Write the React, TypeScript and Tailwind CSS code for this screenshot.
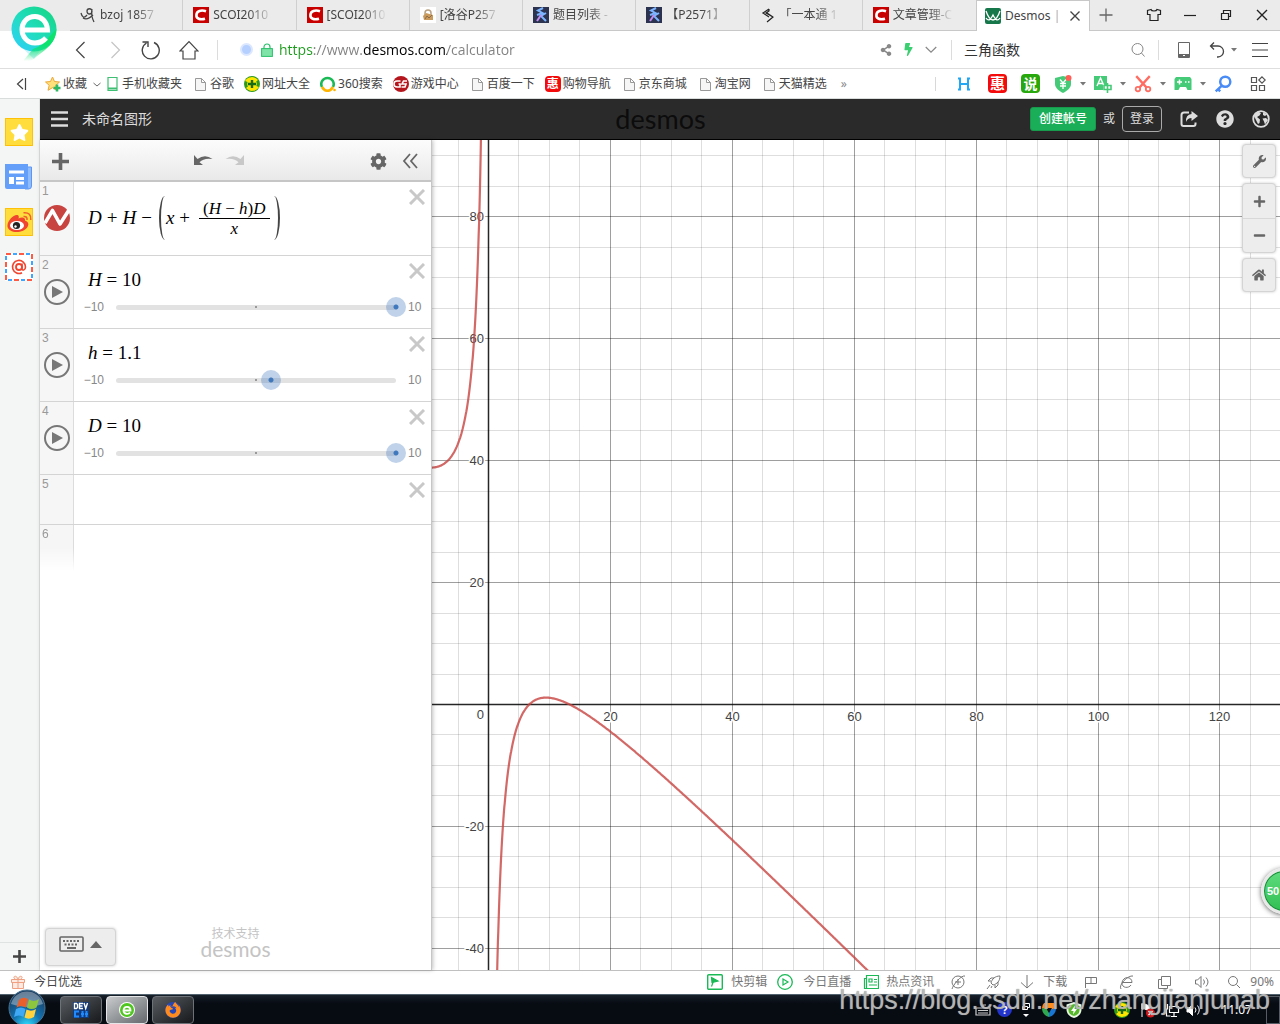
import { useLayoutEffect, useRef, useState } from "react";
import type { ReactNode } from "react";
import {
  FaBolt,
  FaCog,
  FaFirefoxBrowser,
  FaHome,
  FaMinus,
  FaPlus,
  FaQuestionCircle,
  FaShareAlt,
  FaStar,
  FaWrench,
} from "react-icons/fa";

const UI = "font-['Noto_Sans','Noto_Sans_CJK_SC',sans-serif]";
const ARIAL = "font-['Liberation_Sans','Noto_Sans_CJK_SC',sans-serif]";

type SvgProps = { className?: string; children: ReactNode; box?: string };

function Line({ className = "size-4", box = "0 0 16 16", children }: SvgProps) {
  return (
    <svg viewBox={box} className={className} fill="none" stroke="currentColor" aria-hidden="true">
      {children}
    </svg>
  );
}

function Caret() {
  return (
    <svg viewBox="0 0 6 4" className="h-1 w-1.5 text-[#777]" aria-hidden="true">
      <path d="M0 0h6L3 3.500z" fill="currentColor" />
    </svg>
  );
}

/* ---------- favicons ---------- */

function CsdnIcon() {
  return (
    <svg viewBox="0 0 16 16" className="size-4 shrink-0" aria-hidden="true">
      <rect width="16" height="16" fill="#c80000" />
      <path d="M13 4.200C8 2.600 3.800 4 3.400 7.800 3 11.600 7 13.200 12 11.800" fill="none" stroke="#fff" strokeWidth="2.600" />
    </svg>
  );
}

function BzojIcon() {
  return (
    <Line className="size-4 shrink-0 text-[#444]">
      <path d="M1 6c1 4 3 6 6 2M7 4c0 4 5 4 5 0 0-3-5-3-5 0M12 2c-1 5 0 9 2 13M3 11c3 2 7 0 10-3" strokeWidth="1.300" />
    </Line>
  );
}

function LockFavicon() {
  return (
    <svg viewBox="0 0 16 16" className="size-4 shrink-0" aria-hidden="true">
      <rect width="16" height="16" fill="#fff" />
      <path d="M5 8V6a3 3 0 0 1 6 0v2" fill="none" stroke="#b9a283" strokeWidth="1.500" />
      <path d="M3 9l3-3 7 2v5H4z" fill="#c99a5b" />
      <path d="M5 12l2-3 2 2 3-3" stroke="#8c6a45" fill="none" />
    </svg>
  );
}

function LuoguIcon() {
  return (
    <svg viewBox="0 0 16 16" className="size-4 shrink-0" aria-hidden="true">
      <rect width="16" height="16" fill="#2b3350" />
      <path d="M10 1L5 3.500 9.500 6 4 8M13 6L8 9l5 5" fill="none" stroke="#7db4ff" strokeWidth="2" />
      <path d="M8 8l-4 6" stroke="#c58bf0" strokeWidth="2" />
    </svg>
  );
}

function LojIcon() {
  return (
    <Line className="size-4 shrink-0 text-[#222]">
      <path d="M9 2L3 6l6 4M7 6l6 4-6 5M9 2v2L6 6l7 4" strokeWidth="1.200" />
    </Line>
  );
}

function DesmosIcon() {
  return (
    <svg viewBox="0 0 16 16" className="size-4 shrink-0" aria-hidden="true">
      <rect width="16" height="16" rx="2" fill="#16784a" />
      <path d="M1 3c2 6 4 9 7 9s5-3 7-9M1 10c2 3 4 3 7-3 3 6 5 6 7 3" fill="none" stroke="#fff" strokeWidth="1.300" />
    </svg>
  );
}

const tabs = [
  { title: "bzoj 1857", icon: <BzojIcon /> },
  { title: "SCOI2010", icon: <CsdnIcon /> },
  { title: "[SCOI2010", icon: <CsdnIcon /> },
  { title: "[洛谷P257", icon: <LockFavicon /> },
  { title: "题目列表 -", icon: <LuoguIcon /> },
  { title: "【P2571】", icon: <LuoguIcon /> },
  { title: "「一本通 1", icon: <LojIcon /> },
  { title: "文章管理-C", icon: <CsdnIcon /> },
];

function TabBar() {
  return (
    <div className="flex h-[31px] bg-[#ebebeb] pl-[70px] text-xs text-[#444]">
      <div className="flex min-w-0 flex-1 border-b border-[#c8c8c8]">
        {tabs.map((tab, i) => (
          <button
            key={i}
            className={`flex min-w-0 flex-1 basis-0 items-center gap-1 pl-2.5 ${i > 0 ? "shadow-[-1px_0_0_#cfcfcf]" : ""}`}
          >
            {tab.icon}
            <span className="w-[60px] overflow-hidden text-left whitespace-nowrap [mask-image:linear-gradient(to_right,#000_60%,transparent)]">
              {tab.title}
            </span>
          </button>
        ))}
      </div>
      <div className="flex w-[114px] items-center border-x border-t border-[#c8c8c8] bg-white pl-2">
        <button className="flex items-center gap-1">
          <DesmosIcon />
          <span className="w-[64px] overflow-hidden text-left whitespace-nowrap">
            Desmos <span className="text-[#aaa]">|</span>
          </span>
        </button>
        <button aria-label="关闭标签页">
          <Line className="size-3">
            <path d="M2 2l12 12M14 2L2 14" strokeWidth="1.800" />
          </Line>
        </button>
      </div>
      <div className="flex w-[190px] items-center border-b border-[#c8c8c8] text-[#222]">
        <button aria-label="新标签页" className="mr-auto flex w-8 justify-center text-[#666]">
          <Line className="size-4">
            <path d="M8 1.500v13M1.500 8h13" strokeWidth="1.300" />
          </Line>
        </button>
        <button aria-label="皮肤" className="flex w-9 justify-center">
          <Line>
            <path d="M5 2.500L1.500 3.500v4H4v6h8v-6h2.500v-4L11 2.500c-.5 2-5.500 2-6 0z" strokeWidth="1.200" />
          </Line>
        </button>
        <button aria-label="最小化" className="flex w-9 justify-center">
          <Line>
            <path d="M2 8.500h12" strokeWidth="1.200" />
          </Line>
        </button>
        <button aria-label="还原" className="flex w-9 justify-center">
          <Line>
            <path d="M3.500 6.500h7v6h-7zM5.500 6.500v-3h7v6h-2" strokeWidth="1.200" />
          </Line>
        </button>
        <button aria-label="关闭" className="flex w-9 justify-center">
          <Line>
            <path d="M3 3l10 10M13 3L3 13" strokeWidth="1.400" />
          </Line>
        </button>
      </div>
    </div>
  );
}

function BrowserLogo() {
  return (
    <svg viewBox="0 0 46 56" className="absolute top-[6px] left-[11px] h-14 w-[46px]" aria-hidden="true">
      <defs>
        <linearGradient id="pin" x1="0" y1="1" x2="1" y2="0">
          <stop offset="0" stopColor="#2fd0ff" />
          <stop offset=".45" stopColor="#22dcc0" />
          <stop offset="1" stopColor="#12d67c" />
        </linearGradient>
        <linearGradient id="tail" gradientUnits="userSpaceOnUse" x1="0" y1="38" x2="0" y2="55">
          <stop offset="0" stopColor="#0be36c" />
          <stop offset="1" stopColor="#0be36c" stopOpacity="0" />
        </linearGradient>
      </defs>
      <circle cx="23" cy="23" r="22.500" fill="url(#pin)" />
      <path d="M5 36L23 53l8-11z" fill="#2fd0f0" fillOpacity=".25" />
      <path d="M45.500 23C45 33 40 39 34 44L20 55h-8l10-12q12-4 16-12z" fill="url(#tail)" />
      <path d="M11 24h25.500C36 15 30 10.500 24 10.500c-8 0-13 6-13 13S16 37 24 37c4.500 0 8-1.500 11-5" fill="none" stroke="#fff" strokeWidth="5" />
    </svg>
  );
}

function AddressBar() {
  return (
    <div className="flex h-[38px] items-center border-b border-[#dedede] bg-white pr-3 pl-[73px] text-[#444]">
      <div className="flex items-center gap-4">
        <button aria-label="后退">
          <Line className="h-5 w-4">
            <path d="M11.500 0L3.500 8l8 8" strokeWidth="1.200" />
          </Line>
        </button>
        <button aria-label="前进" className="ml-0.5 text-[#c4c4c4]">
          <Line className="h-5 w-4">
            <path d="M4.500 0l8 8-8 8" strokeWidth="1.200" />
          </Line>
        </button>
        <button aria-label="刷新" className="ml-0.5">
          <Line className="size-5" box="0 0 20 20">
            <path d="M13 2.500a8.500 8.500 0 1 1-7.500.5M1.500 2h5.500v5" strokeWidth="1.400" />
          </Line>
        </button>
        <button aria-label="主页" className="ml-0.5">
          <Line className="size-5" box="0 0 20 20">
            <path d="M1 11L10 1.500 19 11h-3v8H4v-8z" strokeWidth="1.200" />
          </Line>
        </button>
      </div>
      <span className="ml-[18px] h-5 w-px bg-[#dcdcdc]" />
      <div className="ml-[22px] flex min-w-0 flex-1 items-center">
        <span className="size-[13px] shrink-0 rounded-full border-2 border-[#dbe7ff] bg-[#b5cfff]" />
        <svg viewBox="0 0 12 14" className="ml-2 h-3.5 w-3 shrink-0" aria-hidden="true">
          <path d="M3 6V4a3 3 0 0 1 6 0v2" fill="none" stroke="#2bbf6a" strokeWidth="1.200" />
          <rect x=".6" y="5.600" width="10.800" height="7.800" fill="#7ee3a6" stroke="#2bbf6a" />
        </svg>
        <input
          aria-label="地址"
          defaultValue="https://www.desmos.com/calculator"
          className="ml-1.5 min-w-0 flex-1 bg-[linear-gradient(to_right,#1a9a1a_0_35px,#808080_35px_84px,#000_84px_168px,#808080_168px)] bg-clip-text font-['Open_Sans',sans-serif] text-sm text-transparent outline-none"
        />
      </div>
      <div className="flex items-center gap-2.5 text-[#888]">
        <button aria-label="分享">
          <FaShareAlt size={12} />
        </button>
        <button aria-label="加速" className="text-[#3ccf72]">
          <FaBolt size={13} />
        </button>
        <button aria-label="展开">
          <Line className="size-3">
            <path d="M1 4l7 7 7-7" strokeWidth="1.600" />
          </Line>
        </button>
      </div>
      <span className="ml-3.5 h-5 w-px bg-[#dcdcdc]" />
      <input aria-label="搜索" defaultValue="三角函数" className="ml-3 w-[162px] text-sm text-[#333] outline-none" />
      <button aria-label="搜索" className="ml-1 text-[#888]">
        <Line>
          <circle cx="7.500" cy="7" r="5.500" />
          <path d="M11.500 11l3 3.500" />
        </Line>
      </button>
      <span className="ml-3 h-5 w-px bg-[#dcdcdc]" />
      <button aria-label="手机" className="ml-[17px] text-[#666]">
        <Line>
          <path d="M2.500.5h11v15h-11z" />
          <path d="M3 13.500h10" strokeWidth="3" />
          <path d="M7 13.500h2" stroke="#fff" />
        </Line>
      </button>
      <button aria-label="恢复" className="ml-[17px] flex items-center gap-1.5">
        <Line box="0 0 16 16">
          <path d="M5 .5L1.500 4 5 7.500M2 4h7a5.500 5.500 0 0 1 0 11H8" strokeWidth="1.300" />
        </Line>
        <Caret />
      </button>
      <button aria-label="菜单" className="ml-[15px]">
        <Line>
          <path d="M0 1.500h16M0 8h16M0 14.500h16" strokeWidth="1.200" />
        </Line>
      </button>
    </div>
  );
}

/* ---------- bookmarks ---------- */

function DocIcon() {
  return (
    <Line className="size-4 text-[#999]">
      <path d="M3.500 2.500h6l4 4v8h-10zM9.500 2.500v4h4" fill="#f6f6f6" />
    </Line>
  );
}

function PhoneIcon() {
  return (
    <Line className="size-4 text-[#3fbf73]">
      <path d="M4 1.500h9v13H4z" strokeWidth="1.200" />
      <path d="M4 12.500h9" strokeWidth="2" />
    </Line>
  );
}

function PlusBall() {
  return (
    <svg viewBox="0 0 16 16" className="size-4" aria-hidden="true">
      <circle cx="8" cy="8" r="8" fill="#2b9a1e" />
      <path d="M1 5a8 8 0 0 1 13-1L9 8zM15 11a8 8 0 0 1-13 1l5-4z" fill="#ffe500" />
      <circle cx="8" cy="8" r="4.800" fill="#ffe500" />
      <path d="M8 4v8M4 8h8" stroke="#176b12" strokeWidth="2.400" />
    </svg>
  );
}

function RingIcon() {
  return (
    <svg viewBox="0 0 16 16" className="size-4" aria-hidden="true">
      <path d="M2 11a6.200 6.200 0 1 1 11 0" fill="none" stroke="#19b955" strokeWidth="2.600" />
      <path d="M2 11c3 5 8 5 11 0" fill="none" stroke="#ffb400" strokeWidth="2.600" />
      <circle cx="14.500" cy="14" r="1.300" fill="#ffb400" />
    </svg>
  );
}

function GameIcon() {
  return (
    <svg viewBox="0 0 16 16" className="size-4" aria-hidden="true">
      <circle cx="8" cy="8" r="8" fill="#b5161d" />
      <path d="M7.500 5H4a3 3 0 0 0 0 6h3V8H5.500M14 5h-3.500L9 8h4l-1 3H8.500" fill="none" stroke="#fff" strokeWidth="1.600" />
    </svg>
  );
}

function HuiIcon({ className = "size-4 text-[12px]" }: { className?: string }) {
  return (
    <span className={`flex items-center justify-center rounded-sm bg-[#f30b0b] leading-none font-bold text-white ${className}`}>
      惠
    </span>
  );
}

const bookmarks = [
  { label: "手机收藏夹", icon: <PhoneIcon /> },
  { label: "谷歌", icon: <DocIcon /> },
  { label: "网址大全", icon: <PlusBall /> },
  { label: "360搜索", icon: <RingIcon /> },
  { label: "游戏中心", icon: <GameIcon /> },
  { label: "百度一下", icon: <DocIcon /> },
  { label: "购物导航", icon: <HuiIcon /> },
  { label: "京东商城", icon: <DocIcon /> },
  { label: "淘宝网", icon: <DocIcon /> },
  { label: "天猫精选", icon: <DocIcon /> },
];

function Bookmarks() {
  return (
    <div className="flex h-[30px] items-center border-b border-[#d9dedc] bg-white pr-3.5 pl-4 text-xs whitespace-nowrap text-[#444]">
      <button aria-label="收起" className="mr-[18px]">
        <Line className="h-3 w-[11px]" box="0 0 11 12">
          <path d="M7 1L1.500 6 7 11M9.500 0v12" strokeWidth="1.200" />
        </Line>
      </button>
      <button className="mr-[3px] flex items-center gap-0.5">
        <svg viewBox="0 0 16 16" className="size-4" aria-hidden="true">
          <path d="M7.500 1l2 4.500 5 .5-3.700 3.300 1 5-4.300-2.600-4.500 2.600 1.200-5L.5 6l5-.5z" fill="#ffe07a" stroke="#eda73a" />
          <path d="M12 8.500v7M8.500 12h7" stroke="#2fb865" strokeWidth="2.600" />
        </svg>
        收藏
        <Line className="ml-1 h-3 w-2">
          <path d="M1 6l7 6 7-6" strokeWidth="1.600" />
        </Line>
      </button>
      <div className="flex items-center gap-2.5">
        {bookmarks.map((item) => (
          <a key={item.label} href="#" className="flex items-center gap-0.5">
            {item.icon}
            {item.label}
          </a>
        ))}
        <button className="ml-1 text-[#888]">»</button>
      </div>
      <div className="ml-auto flex items-center gap-3.5">
        <span className="mr-1 h-3.5 w-px bg-[#d8d8d8]" />
        <button aria-label="H">
          <Line className="size-5 text-[#22a7f2]" box="0 0 20 20">
            <path d="M6 4v12M14 4v12M6 10h8M4 4.500h3M13 4.500h3M4 15.500h3M13 15.500h3" strokeWidth="2" />
          </Line>
        </button>
        <button aria-label="惠购">
          <HuiIcon className="size-[19px] text-[15px]" />
        </button>
        <button className="flex size-[19px] items-center justify-center rounded-sm bg-[#28a80c] text-[14px] leading-none font-bold text-white">
          说
        </button>
        <button aria-label="网购先赔" className="flex items-center gap-2">
          <svg viewBox="0 0 18 18" className="size-[18px]" aria-hidden="true">
            <path d="M1 3l8-2 8 2v6c0 4-4 7-8 9-4-2-8-5-8-9z" fill="#45cb77" />
            <path d="M6 4.500L9 8l3-3.500M9 8v6M6 8.500h6M6 11h6" fill="none" stroke="#fff" strokeWidth="1.300" />
            <circle cx="14.500" cy="3" r="3" fill="#ff5f57" />
          </svg>
          <Caret />
        </button>
        <button aria-label="翻译" className="-ml-1.5 flex items-center gap-2">
          <svg viewBox="0 0 18 18" className="size-[18px]" aria-hidden="true">
            <path d="M0 1h13v9h-4v5H0z" fill="#45cb77" />
            <path d="M3 11l3.500-8L10 11M4 8.500h5" fill="none" stroke="#fff" strokeWidth="1.400" />
            <path d="M10 10.500h7v4h-7zM13.500 8v10" fill="none" stroke="#45cb77" strokeWidth="1.600" />
          </svg>
          <Caret />
        </button>
        <button aria-label="截图" className="-ml-1.5 flex items-center gap-2">
          <Line className="size-[18px] text-[#ff6d62]">
            <path d="M2 1l9 10M14 1L5 11" strokeWidth="2" />
            <circle cx="3.500" cy="12.500" r="2" strokeWidth="1.600" />
            <circle cx="12.500" cy="12.500" r="2" strokeWidth="1.600" />
          </Line>
          <Caret />
        </button>
        <button aria-label="游戏" className="-ml-1.5 flex items-center gap-2">
          <svg viewBox="0 0 18 16" className="h-4 w-[18px]" aria-hidden="true">
            <path d="M2 1h14l1.500 2v11h-4l-1.500-3H6l-1.500 3h-4V3z" fill="#45cb77" />
            <path d="M5.500 3.500v5M3 6h5M11 6h1.500M14 6h1.500" stroke="#fff" strokeWidth="1.500" />
          </svg>
          <Caret />
        </button>
        <button aria-label="密码" className="-ml-1.5 text-[#4a8cf7]">
          <Line className="size-[18px]">
            <circle cx="10" cy="6" r="4.500" strokeWidth="2.200" />
            <path d="M7 9.500L1.500 14.500M4 13l1.500 1.500" strokeWidth="2.200" />
          </Line>
        </button>
        <button aria-label="扩展" className="ml-1 text-[#555]">
          <Line>
            <path d="M1.500 1.500h5v5h-5zM1.500 9.500h5v5h-5zM9.500 9.500h5v5h-5zM12 .8L15.200 4 12 7.200 8.800 4z" strokeWidth="1.200" />
          </Line>
        </button>
      </div>
    </div>
  );
}

/* ---------- left strip of the browser ---------- */

function SideStrip() {
  return (
    <aside className="flex w-10 shrink-0 flex-col border-r border-[#dfe3e1] bg-[#f4f6f5]">
      <div className="flex flex-col gap-[17px] pt-[19px] pl-[5px]">
        <button aria-label="收藏" className="flex size-7 items-center justify-center border border-[#ffc107] bg-[#ffdd3c] text-white">
          <FaStar size={19} />
        </button>
        <button aria-label="资讯">
          <svg viewBox="0 0 28 28" className="size-7" aria-hidden="true">
            <path d="M22 4h4.500v19q0 3-3 3H20z" fill="#8fbcff" stroke="#5c97f5" />
            <path d="M0 1h23v22q0 3 2 3H2q-2 0-2-2z" fill="#64a0fa" />
            <path d="M4 9h15M11 15.500h8M11 20h8" stroke="#fff" strokeWidth="3" />
            <path d="M4 14h5v7H4z" fill="#fff" />
          </svg>
        </button>
        <button aria-label="微博">
          <svg viewBox="0 0 28 28" className="size-7" aria-hidden="true">
            <rect x=".5" y=".5" width="27" height="27" fill="#ffdd3c" stroke="#ffc107" />
            <path d="M2.500 17C3 12 9 6 12.500 7c1.500.5 1.500 2 1 3.500 3-1.500 7-1.500 6.500 2 3 1 4 3 3 5.500-2 5-9 6.500-13 6-4.500-.5-8-3-7.500-7z" fill="#f0452f" />
            <ellipse cx="12" cy="17.500" rx="7" ry="4.500" fill="#fff" />
            <circle cx="11.500" cy="17.500" r="3.600" fill="#222" />
            <circle cx="10.500" cy="18.500" r="1.200" fill="#fff" />
            <path d="M18.500 8.500q4-.5 3.500 3.500M18.500 4.800Q26.500 4 25.800 12" fill="none" stroke="#f0602f" strokeWidth="1.600" />
          </svg>
        </button>
        <button aria-label="邮箱">
          <svg viewBox="0 0 28 28" className="size-7" aria-hidden="true">
            <rect width="28" height="28" fill="#fff" />
            <rect x="1" y="1" width="26" height="26" fill="none" stroke="#ff5a43" strokeWidth="2" strokeDasharray="5 8" />
            <rect x="1" y="1" width="26" height="26" fill="none" stroke="#3ea6ff" strokeWidth="2" strokeDasharray="4 9" strokeDashoffset="6" />
            <circle cx="14" cy="14" r="3" fill="none" stroke="#f0452f" strokeWidth="1.800" />
            <path d="M17 10.500v5c0 2.500 3.500 2 3.500-1.500A6.500 6.500 0 1 0 17 19.700" fill="none" stroke="#f0452f" strokeWidth="1.600" />
          </svg>
        </button>
      </div>
      <button aria-label="添加" className="mt-auto flex h-7 items-center justify-center border-t border-[#dfe3e1] text-[#444]">
        <Line className="size-[13px]" box="0 0 13 13">
          <path d="M6.500 0v13M0 6.500h13" strokeWidth="2.600" />
        </Line>
      </button>
    </aside>
  );
}

/* ---------- calculator ---------- */

function CalcHeader() {
  return (
    <header className="grid h-[41px] grid-cols-[1fr_auto_1fr] items-center border-b border-black bg-[#2a2a2a] pr-2.5 pl-[11px] text-[#ddd]">
      <div className="flex items-center gap-3.5">
        <button aria-label="菜单">
          <Line className="h-4 w-[17px]" box="0 0 17 16">
            <path d="M0 1.500h17M0 8h17M0 14.500h17" strokeWidth="2.600" />
          </Line>
        </button>
        <h1 className="text-sm">未命名图形</h1>
      </div>
      <div className="pb-0.5 font-['Lato',sans-serif] text-[27px] leading-none text-[#0c0c0c]">desmos</div>
      <div className="flex items-center justify-end text-xs">
        <button className="h-6 rounded-[3px] border border-[#189a4d] bg-[#1bae58] px-2 font-medium text-white">创建帐号</button>
        <span className="mx-[7px]">或</span>
        <button className="h-[26px] rounded border border-[#aaa] px-[7px]">登录</button>
        <button aria-label="分享图形" className="ml-[18px]">
          <Line className="size-[18px]" box="0 0 18 18">
            <path d="M9 2.500H4Q1.500 2.500 1.500 5v9q0 2 2 2h10q2 0 2-2v-1.500" strokeWidth="2" />
            <path d="M11.500 1L18 6l-6.500 5V8Q7.500 8 6 12 5.500 4.500 11.500 4z" fill="currentColor" stroke="none" />
          </Line>
        </button>
        <button aria-label="帮助" className="ml-[18px]">
          <FaQuestionCircle size={18} />
        </button>
        <button aria-label="语言" className="ml-[18px]">
          <Line className="size-[18px]" box="0 0 18 18">
            <circle cx="9" cy="9" r="7.800" strokeWidth="1.800" />
            <path d="M2 6q1-3 4-4.500L9 3 7.500 5.500 5 7l3 2.500L7.500 13 6 14zM11 2l4 2.500-2 1.500-2-1zM10.500 8.500L14 8l2 2-3 4.500-1-3z" fill="currentColor" stroke="none" />
          </Line>
        </button>
      </div>
    </header>
  );
}

function Toolbar() {
  return (
    <div className="flex h-[42px] shrink-0 items-center border-b-2 border-[#c6c6c6] bg-linear-to-b from-[#fcfcfc] to-[#e9e9e9] pt-0.5 pr-[13px] pl-3 text-[#666]">
      <button aria-label="添加项目" className="w-[141px]">
        <Line className="size-[17px]">
          <path d="M8 0v16M0 8h16" strokeWidth="3.400" />
        </Line>
      </button>
      <button aria-label="撤销">
        <Line className="h-4 w-5" box="0 0 20 16">
          <path d="M1 2v10h9L6.500 9.200Q11 4.500 19.500 6 12 .5 4.500 6z" fill="currentColor" stroke="none" />
        </Line>
      </button>
      <button aria-label="重做" className="ml-3 text-[#c8c8c8]">
        <Line className="h-4 w-5" box="0 0 20 16">
          <path d="M19 2v10h-9l3.500-2.800Q9 4.500.5 6 8 .5 15.500 6z" fill="currentColor" stroke="none" />
        </Line>
      </button>
      <button aria-label="设置" className="ml-auto">
        <FaCog size={17} />
      </button>
      <button aria-label="隐藏列表" className="ml-[15px]">
        <Line className="size-4">
          <path d="M8 1L2 8l6 7M15 1L9 8l6 7" strokeWidth="1.800" />
        </Line>
      </button>
    </div>
  );
}

function RemoveButton() {
  return (
    <button aria-label="删除" className="ml-auto self-start text-[#c8c8c8]">
      <Line>
        <path d="M1 1l14 14M15 1L1 15" strokeWidth="3" />
      </Line>
    </button>
  );
}

function RowTab({ index, children }: { index: number; children?: ReactNode }) {
  return (
    <div className="flex w-[34px] shrink-0 flex-col items-center gap-2 border-r border-[#dcdcdc] bg-[#f6f6f6] pt-[3px]">
      <span className="self-start pl-0.5 text-xs leading-3 text-[#999]">{index}</span>
      {children}
    </div>
  );
}

function Paren({ side }: { side: "left" | "right" }) {
  return (
    <span
      className={`h-11 w-1.5 border-[#444] ${side === "left" ? "rounded-l-[100%_50%] border-l-2" : "rounded-r-[100%_50%] border-r-2"}`}
    />
  );
}

const MATH = "font-['Liberation_Serif',serif] text-[19px] leading-6 text-black";

function FormulaRow() {
  return (
    <li className="flex border-b border-[#d4d4d4]">
      <RowTab index={1}>
        <button aria-label="隐藏曲线">
          <svg viewBox="0 0 26 26" className="size-[26px]" aria-hidden="true">
            <circle cx="13" cy="13" r="13" fill="#c74440" />
            <path d="M1 18L8.500 5.500 16 19 25 5" fill="none" stroke="#fff" strokeWidth="3.600" strokeLinejoin="round" />
          </svg>
        </button>
      </RowTab>
      <div className="flex flex-1 items-center pt-[7px] pr-1.5 pb-2 pl-3.5">
        <div className={`flex h-[58px] items-center ${MATH}`}>
          <i>D</i>
          <span className="mx-[5px]">+</span>
          <i>H</i>
          <span className="mx-[5px]">−</span>
          <span className="w-0.5" />
          <Paren side="left" />
          <i className="ml-px">x</i>
          <span className="mx-[5px]">+</span>
          <span className="ml-1 flex flex-col items-center text-[17px] leading-[19px]">
            <span className="border-b border-black px-1">
              (<i>H</i> − <i>h</i>)<i>D</i>
            </span>
            <i>x</i>
          </span>
          <span className="w-1" />
          <Paren side="right" />
        </div>
        <RemoveButton />
      </div>
    </li>
  );
}

function SliderRow({ index, name, value }: { index: number; name: string; value: number }) {
  return (
    <li className="flex border-b border-[#d4d4d4]">
      <RowTab index={index}>
        <button aria-label={`播放 ${name}`} className="flex size-[26px] items-center justify-center rounded-full border-2 border-[#777] pl-0.5 text-[#777]">
          <svg viewBox="0 0 11 12" className="h-3 w-[11px]" aria-hidden="true">
            <path d="M0 0l11 6-11 6z" fill="currentColor" />
          </svg>
        </button>
      </RowTab>
      <div className="flex-1 pt-[7px] pr-1.5 pb-[11px]">
        <div className="flex pl-3.5">
          <span className={`pt-[5px] ${MATH}`}>
            <i>{name}</i> = {value}
          </span>
          <RemoveButton />
        </div>
        <div className="mt-[5px] flex h-5 items-center text-xs text-[#888]">
          <span className="w-8 pr-0.5 text-right">−10</span>
          <span className="relative flex h-5 flex-1 items-center px-2.5">
            <span className="flex h-[5px] flex-1 items-center justify-center rounded-full bg-[#e2e2e2]">
              <span className="size-0.5 bg-[#999]" />
            </span>
            <input
              type="range"
              aria-label={name}
              min={-10}
              max={10}
              step={0.1}
              defaultValue={value}
              className="absolute inset-0 w-full appearance-none bg-transparent [&::-webkit-slider-thumb]:size-5 [&::-webkit-slider-thumb]:appearance-none [&::-webkit-slider-thumb]:rounded-full [&::-webkit-slider-thumb]:bg-[radial-gradient(circle,#4078bd_0_2px,#4078bd55_3px)]"
            />
          </span>
          <span className="w-[19px] pl-0.5">10</span>
        </div>
      </div>
    </li>
  );
}

function ExpressionPanel() {
  return (
    <section className="z-10 flex w-[392px] shrink-0 flex-col border-r border-[#c6c6c6] bg-white shadow-[1px_0_4px_rgba(0,0,0,0.25)]">
      <Toolbar />
      <ol>
        <FormulaRow />
        <SliderRow index={2} name="H" value={10} />
        <SliderRow index={3} name="h" value={1.1} />
        <SliderRow index={4} name="D" value={10} />
        <li className="flex h-[50px] border-b border-[#d4d4d4]">
          <RowTab index={5} />
          <div className="flex flex-1 pt-[7px] pr-1.5">
            <RemoveButton />
          </div>
        </li>
        <li className="flex h-[46px] [mask-image:linear-gradient(#000_50%,transparent)]">
          <RowTab index={6} />
        </li>
      </ol>
      <div className="mt-auto grid grid-cols-[1fr_auto_1fr] items-end px-[5px] pb-1">
        <button
          aria-label="键盘"
          className="flex h-[38px] w-[71px] items-center justify-center gap-1.5 rounded border border-[#d4d4d4] bg-[#ededed] pb-1.5 text-[#666] shadow-[0_0_3px_rgba(0,0,0,0.2)]"
        >
          <Line className="h-4 w-[25px]" box="0 0 25 16">
            <rect x="1" y="1" width="23" height="14" rx="1" strokeWidth="1.600" />
            <path d="M4 5h17M5.500 8.500h14" strokeWidth="2" strokeDasharray="2 1.500" />
            <path d="M8 12h9" strokeWidth="2" />
          </Line>
          <svg viewBox="0 0 12 7" className="h-[7px] w-3" aria-hidden="true">
            <path d="M0 7l6-7 6 7z" fill="currentColor" />
          </svg>
        </button>
        <div className="flex flex-col items-center pb-2 text-[#c4c4c4]">
          <span className="text-xs leading-3">技术支持</span>
          <span className="font-['Lato',sans-serif] text-[21px] leading-[18px]">desmos</span>
        </div>
      </div>
    </section>
  );
}

/* graph paper: 20 units are 122px wide */
const OX = 57;
const OY = 565;
const UNIT = 6.095;

const px = (x: number) => Math.round(OX + x * UNIT) - 0.5;
const py = (y: number) => Math.round(OY - y * UNIT) - 0.5;

const steps = (from: number, to: number, by: number) =>
  Array.from({ length: Math.floor((to - from) / by) + 1 }, (_, i) => from + i * by);

// D + H - (x + (H - h) D / x)
const f = (x: number) => 20 - (x + 89 / x);

const trace = (from: number, to: number) =>
  steps(from, to, 0.05)
    .map((x, i) => `${i ? "L" : "M"}${(OX - 0.5 + x * UNIT).toFixed(1)} ${(OY - 0.5 - f(x) * UNIT).toFixed(1)}`)
    .join("");

const lineOpacity = (v: number) => (v === 0 ? 0.85 : v % 20 ? 0.13 : 0.38);

function Graph() {
  const ref = useRef<SVGSVGElement>(null);
  const [size, setSize] = useState({ w: 848, h: 830 });

  useLayoutEffect(() => {
    const measure = () => {
      const box = ref.current?.getBoundingClientRect();
      if (box) setSize({ w: box.width, h: box.height });
    };
    measure();
    window.addEventListener("resize", measure);
    return () => window.removeEventListener("resize", measure);
  }, []);

  const xs = steps(-5, 400, 5).filter((x) => px(x) < size.w);
  const ys = steps(-200, 90, 5).filter((y) => py(y) < size.h);

  return (
    <svg ref={ref} className={`block h-full w-full bg-white ${ARIAL}`} role="img" aria-label="图形">
      {xs.map((x) => (
        <line key={x} x1={px(x)} x2={px(x)} y1="0" y2="100%" stroke="#000" strokeOpacity={lineOpacity(x)} strokeWidth={x === 0 ? 1.5 : 1} />
      ))}
      {ys.map((y) => (
        <line key={y} y1={py(y)} y2={py(y)} x1="0" x2="100%" stroke="#000" strokeOpacity={lineOpacity(y)} strokeWidth={y === 0 ? 1.5 : 1} />
      ))}
      <g fontSize="13" fill="#444" stroke="#fff" strokeWidth="3" paintOrder="stroke">
        {xs
          .filter((x) => x > 0 && x % 20 === 0)
          .map((x) => (
            <text key={x} x={px(x)} y={OY + 16} textAnchor="middle">
              {x}
            </text>
          ))}
        {ys
          .filter((y) => y !== 0 && y % 20 === 0)
          .map((y) => (
            <text key={y} x={OX - 5} y={py(y) + 4} textAnchor="end">
              {y}
            </text>
          ))}
        <text x={OX - 5} y={OY + 14} textAnchor="end">
          0
        </text>
      </g>
      <path d={trace(-12, -0.5) + trace(0.5, 200)} fill="none" stroke="#c74440" strokeOpacity="0.8" strokeWidth="2.200" />
    </svg>
  );
}

const graphButton = "flex h-[34px] w-full items-center justify-center text-[#666]";
const graphGroup = "rounded border border-[#d4d4d4] bg-[#ededed] shadow-[0_0_3px_rgba(0,0,0,0.2)]";

function GraphControls() {
  return (
    <div className="absolute top-1 right-1 flex w-[34px] flex-col gap-[5px]">
      <button aria-label="图形设置" className={`${graphButton} ${graphGroup}`}>
        <FaWrench size={13} />
      </button>
      <div className={graphGroup}>
        <button aria-label="放大" className={graphButton}>
          <FaPlus size={13} />
        </button>
        <button aria-label="缩小" className={`${graphButton} border-t border-[#d8d8d8]`}>
          <FaMinus size={13} />
        </button>
      </div>
      <button aria-label="默认视图" className={`${graphButton} ${graphGroup}`}>
        <FaHome size={14} />
      </button>
    </div>
  );
}

/* ---------- bottom bars ---------- */

function StatusBar() {
  return (
    <div className="flex h-6 shrink-0 items-center border-t border-[#c0c0c0] bg-white pr-1.5 pb-0.5 pl-2.5 text-xs text-[#777]">
      <button className="flex items-center gap-2 text-[#444]">
        <Line className="size-4 text-[#f0a080]">
          <path d="M1.500 5.500h13v3h-13zM2.500 8.500h11v6h-11zM8 5v10M8 5C6 0 2 3 5 5M8 5c2-5 6-2 3 0" fill="#fdeae2" />
        </Line>
        今日优选
      </button>
      <div className="ml-auto flex items-center">
        <button className="flex items-center gap-2">
          <Line className="size-4 text-[#19b955]">
            <rect x=".7" y=".7" width="14.600" height="14.600" rx="1" strokeWidth="1.400" />
            <path d="M4.500 3.500L11 7 5 8.500zM4.500 12.500L6 8.500" fill="currentColor" strokeWidth="1.200" />
          </Line>
          快剪辑
        </button>
        <button className="ml-2.5 flex items-center gap-2.5">
          <Line className="size-4 text-[#19b955]">
            <circle cx="8" cy="8" r="7.300" strokeWidth="1.300" />
            <path d="M6 5l5 3-5 3z" strokeWidth="1.200" />
          </Line>
          今日直播
        </button>
        <button className="ml-3 flex items-center gap-[7px]">
          <Line className="size-4 text-[#19b955]">
            <path d="M3.500 1.500h12v13h-14v-10h2zM3.500 4v10M6 5h3v3H6zM11 5.500h3M11 8h3M6 11h8" strokeWidth="1.200" />
          </Line>
          热点资讯
        </button>
        <button aria-label="加速器" className="ml-4">
          <Line>
            <circle cx="8" cy="8" r="6" />
            <path d="M8 5v6M5 8h6M2 15C3 11 11 1 15 2" />
          </Line>
        </button>
        <button aria-label="火箭" className="ml-5">
          <Line>
            <path d="M5 9c1-4 4-7 9-7 0 5-3 8-7 9zM5 7H2l3-3h3M9 11v3l3-3V8M4 11l-3 4M6 12l-1 2" />
          </Line>
        </button>
        <button className="ml-[17px] flex items-center gap-2">
          <Line>
            <path d="M8 1v13M2 8.500L8 14l6-5.500" />
          </Line>
          下载
        </button>
        <button aria-label="标记" className="ml-4">
          <Line>
            <path d="M2.500 14V3.500h11v6h-11M8 3.500v6" />
          </Line>
        </button>
        <button aria-label="兼容模式" className="ml-5">
          <Line>
            <path d="M3 8.500h10C13 2 4 2 3 8.500c-.5 6 7 6 9 2.500M2 15C-1 11 9 1 14 2" />
          </Line>
        </button>
        <button aria-label="分屏" className="ml-[21px]">
          <Line>
            <path d="M5.500 2.500h9v9h-9zM5 5.500H2.500v9h9V12" />
          </Line>
        </button>
        <button aria-label="声音" className="ml-[22px]">
          <Line>
            <path d="M1.500 6h2L7 2.500v11L3.500 10h-2zM9.500 5.500q2 2.500 0 5M12 3.500q4 4.500 0 9" />
          </Line>
        </button>
        <button className="ml-4 flex items-center gap-2">
          <Line>
            <circle cx="7" cy="7" r="4.500" />
            <path d="M10.500 10.500L14 14" />
          </Line>
          90%
        </button>
      </div>
    </div>
  );
}

function StartOrb() {
  return (
    <svg viewBox="0 0 38 38" className="absolute bottom-[-3px] left-2 size-[38px]" aria-hidden="true">
      <defs>
        <radialGradient id="orb" cx=".5" cy="1" r=".9">
          <stop offset="0" stopColor="#2fe0ff" />
          <stop offset=".45" stopColor="#1272b0" />
          <stop offset="1" stopColor="#1a3f63" />
        </radialGradient>
      </defs>
      <circle cx="19" cy="19" r="18" fill="url(#orb)" stroke="#4c7592" />
      <path d="M3 15a16.500 16.500 0 0 1 32 0q-16 6-32 0z" fill="#fff" fillOpacity=".35" />
      <path d="M11 11q4-4 9-1l-2 8.500q-5-3-9.500 0z" fill="#e8602c" />
      <path d="M21 10.500q5 3 10-.5l-2.500 8.500q-5 3-9.500 0z" fill="#8cc63f" />
      <path d="M8 20q5-3 9.500 0L15.500 28q-4.500-3-9.500 0z" fill="#3fa9f5" />
      <path d="M18.500 20.500q5 2.500 9.500-.5l-2 8q-5 3-9.500.5z" fill="#ffd23e" />
    </svg>
  );
}

const taskButton = "flex h-7 w-[42px] items-center justify-center rounded-sm border";

function Taskbar() {
  return (
    <footer className="relative flex h-[30px] shrink-0 items-center border-t border-[#51616e] bg-linear-to-b from-[#18202a] to-[#070b12] to-30% pl-[60px] text-white">
      <StartOrb />
      <div className="flex gap-1">
        <button aria-label="Dev-C++" className={`${taskButton} border-[#6c7278] bg-linear-to-br from-[#5a5e62] to-[#17191c]`}>
          <svg viewBox="0 0 16 16" className="size-4" aria-hidden="true">
            <rect width="16" height="16" fill="#123a7a" />
            <path d="M1.500 1.500v5h2l1-1v-3l-1-1zM10 1.500H6.500v5H10M6.500 4h3M11 1l1.700 5.500L14.500 1" fill="none" stroke="#fff" strokeWidth="1.400" />
            <path d="M6 9.500H2v5h4M8 12h3M9.500 9v6M12 12h3M13.500 9v6" fill="none" stroke="#1f8bff" strokeWidth="2" />
          </svg>
        </button>
        <button aria-label="浏览器" className={`${taskButton} border-[#e4e6e8] bg-linear-to-br from-[#c9cbcd] to-[#65696d]`}>
          <svg viewBox="0 0 16 16" className="size-4" aria-hidden="true">
            <circle cx="8" cy="8" r="8" fill="#fff" />
            <circle cx="8" cy="8" r="7" fill="#4fc520" />
            <path d="M4.500 8.500h7C11.500 4 5 3.500 4.500 8.500c0 4 5 4 6.500 2" fill="none" stroke="#fff" strokeWidth="1.800" />
          </svg>
        </button>
        <button aria-label="Firefox" className={`${taskButton} border-[#6c7278] bg-linear-to-br from-[#5a5e62] to-[#17191c]`}>
          <span className="flex size-4 items-center justify-center rounded-full bg-[#2546b8] text-[#ff8a1e]">
            <FaFirefoxBrowser size={16} />
          </span>
        </button>
      </div>
      <div className="ml-auto flex items-center">
        <Line className="size-4 text-[#ccc]">
          <path d="M1 6h14v7H1zM3 8.500h10M3 11h10M8 6V3h3" strokeWidth="1.200" />
        </Line>
        <span className="ml-1.5 flex size-[15px] items-center justify-center rounded-full bg-[#2234c9] text-[11px] leading-none font-bold">?</span>
        <Line className="ml-1.5 size-4">
          <path d="M4.500 4.500h5v3h-5zM6.500 4V1.500h5v4h-2" />
          <path d="M5 12h6l-3 3z" fill="currentColor" stroke="none" />
        </Line>
        <svg viewBox="0 0 14 14" className="ml-2 size-3.5" aria-hidden="true">
          <path d="M0 5a7 7 0 0 1 14 0L7 8z" fill="#ff8d1c" />
          <path d="M14 5c0 5-3 8-7 9V7z" fill="#1976d2" />
          <path d="M0 5c0 5 3 8 7 9V7z" fill="#2fa84f" />
          <path d="M4 5h6L7 10z" fill="#0b0f16" />
        </svg>
        <svg viewBox="0 0 16 16" className="ml-2.5 size-4" aria-hidden="true">
          <path d="M8 0l7.500 2.500v5C15.500 12 12 15 8 16 4 15 .5 12 .5 7.500v-5z" fill="#e9f7e2" />
          <path d="M8 2l5.500 2v4c0 3.500-2.500 5-5.500 6-3-1-5.500-2.500-5.500-6V4z" fill="#57b82c" />
          <path d="M9 3.500L5 9h2.500L7 12.500 11 7H8.500z" fill="#fff" />
        </svg>
        <span className="ml-8">
          <PlusBall />
        </span>
        <svg viewBox="0 0 16 16" className="ml-2.5 size-4" aria-hidden="true">
          <path d="M2 1v14M2 2c4-1 4 2 8 1v5c-4 1-4-2-8-1z" fill="#fff" stroke="#fff" />
          <circle cx="10.500" cy="11" r="4.500" fill="#d7191c" />
          <path d="M8.500 9l4 4M12.500 9l-4 4" stroke="#fff" strokeWidth="1.400" />
        </svg>
        <Line className="ml-2 size-4">
          <path d="M5.500 4.500h9v6h-9zM10 11v3M7 14.500h6M1.500 2v5h2V2M2.500 7v7h4" strokeWidth="1.200" />
        </Line>
        <Line className="ml-1.5 size-4">
          <path d="M1 6h2l3.500-3.500v11L3 10H1z" fill="currentColor" />
          <path d="M9 5.500q2 2.500 0 5M11.500 3.500q3.500 4.500 0 9" />
        </Line>
        <time className="ml-[19px] text-xs">11:07</time>
        <button aria-label="显示桌面" className="ml-3.5 h-7 w-3.5 border border-[#555c63]" />
      </div>
    </footer>
  );
}

export default function App() {
  return (
    <div className={`relative flex h-screen flex-col overflow-hidden bg-white ${UI}`}>
      <TabBar />
      <AddressBar />
      <Bookmarks />
      <BrowserLogo />

      <div className="flex min-h-0 flex-1">
        <SideStrip />
        <main className={`flex min-w-0 flex-1 flex-col ${ARIAL}`}>
          <CalcHeader />
          <div className="flex min-h-0 flex-1">
            <ExpressionPanel />
            <div className="relative min-w-0 flex-1 overflow-hidden">
              <Graph />
              <GraphControls />
              <button className="absolute right-[-27px] bottom-14 size-[46px] rounded-full border-[3px] border-[#e8e8e8] bg-linear-to-b from-[#5fdc7e] to-[#2fbf52] pl-[3px] text-left text-[11px] font-bold text-white shadow-[0_1px_5px_rgba(0,0,0,0.6),inset_0_0_0_1px_#1c8a3c]">
                50
              </button>
            </div>
          </div>
        </main>
      </div>

      <StatusBar />
      <Taskbar />
      <div className="pointer-events-none absolute right-2.5 bottom-1.5 font-['Liberation_Sans',sans-serif] text-[27px] leading-9 text-[#c8c8c8]/80 [text-shadow:0_0_1px_#777]">
        https://blog.csdn.net/zhangjianjunab
      </div>
    </div>
  );
}
